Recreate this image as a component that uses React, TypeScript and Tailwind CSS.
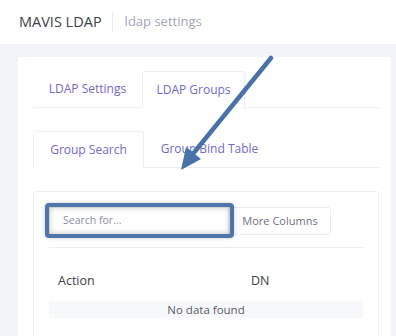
import React from "react";

export default function App() {
  const font = { fontFamily: "'Open Sans', 'Noto Sans', sans-serif" };
  return (
    <div className="relative w-[396px] h-[336px] overflow-hidden bg-[#f2f3f8]" style={font}>
      <div className="h-[44px] bg-white flex items-center pl-[19px]">
        <span className="text-[14.5px] text-[#3f4047]">MAVIS LDAP</span>
        <div className="ml-[10px] h-[20px] border-l border-[#e7e8ef]" />
        <span className="ml-[12px] text-[13px] text-[#a2a5bb]">ldap settings</span>
      </div>
      <div className="pt-[13px] pl-[18px] pr-[5px]">
        <div className="bg-white rounded-[3px] pt-[14px] pl-[15px] pr-[12px] h-[300px]">
          <div className="flex border-b border-[#ebedf2] h-[37px]">
            <div className="w-[109px] flex items-center justify-center text-[12px] text-[#716aca]">LDAP Settings</div>
            <div className="w-[103px] h-[38px] flex items-center justify-center text-[12px] text-[#716aca] border border-[#ebedf2] border-b-white rounded-t-[3px] bg-white">LDAP Groups</div>
          </div>
          <div className="mt-[23px] flex border-b border-[#ebedf2] h-[37px]">
            <div className="w-[111px] h-[38px] flex items-center justify-center text-[12px] text-[#716aca] border border-[#ebedf2] border-b-white rounded-t-[3px] bg-white">Group Search</div>
            <div className="w-[131px] flex items-center justify-center text-[12px] text-[#716aca]">Group Bind Table</div>
          </div>
          <div className="mt-[23px] border border-[#ebedf2] rounded-[3px] px-[15px] pt-[15px] h-[160px]">
            <div className="flex items-center">
              <div className="relative w-[180px] h-[28px]">
                <div className="w-full h-full border border-[#ebedf2] flex items-center pl-[13px] text-[10.5px] text-[#8b8da3]">Search for...</div>
                <div className="absolute left-[-4px] top-[-4px] w-[189px] h-[35px] border-[4px] border-[#4f76ab] rounded-[4px] shadow-[inset_0_0_6px_rgba(0,0,0,0.25),0_0_4px_rgba(0,0,0,0.2)]" />
              </div>
              <div className="w-[102px] h-[28px] border border-[#e8e9f3] rounded-r-[3px] flex items-center justify-center text-[11px] text-[#6f7185]">More Columns</div>
            </div>
            <div className="mt-[12px] border-t border-[#ebedf2]" />
            <div className="h-[53px] pt-[24px] flex items-start text-[12.5px] text-[#3f4047]">
              <div className="w-[202px] pl-[9px]">Action</div>
              <div>DN</div>
            </div>
            <div className="h-[17px] bg-[#f7f8fa] flex items-center justify-center text-[11.5px] text-[#575962]">No data found</div>
          </div>
        </div>
      </div>
      <svg className="absolute left-0 top-0 pointer-events-none" width="396" height="336">
        <line x1="271" y1="58" x2="192" y2="155" stroke="#4a71a8" strokeWidth="4.5" strokeLinecap="round" />
        <polygon points="181,170 186,147 201,159" fill="#4a71a8" />
      </svg>
    </div>
  );
}
